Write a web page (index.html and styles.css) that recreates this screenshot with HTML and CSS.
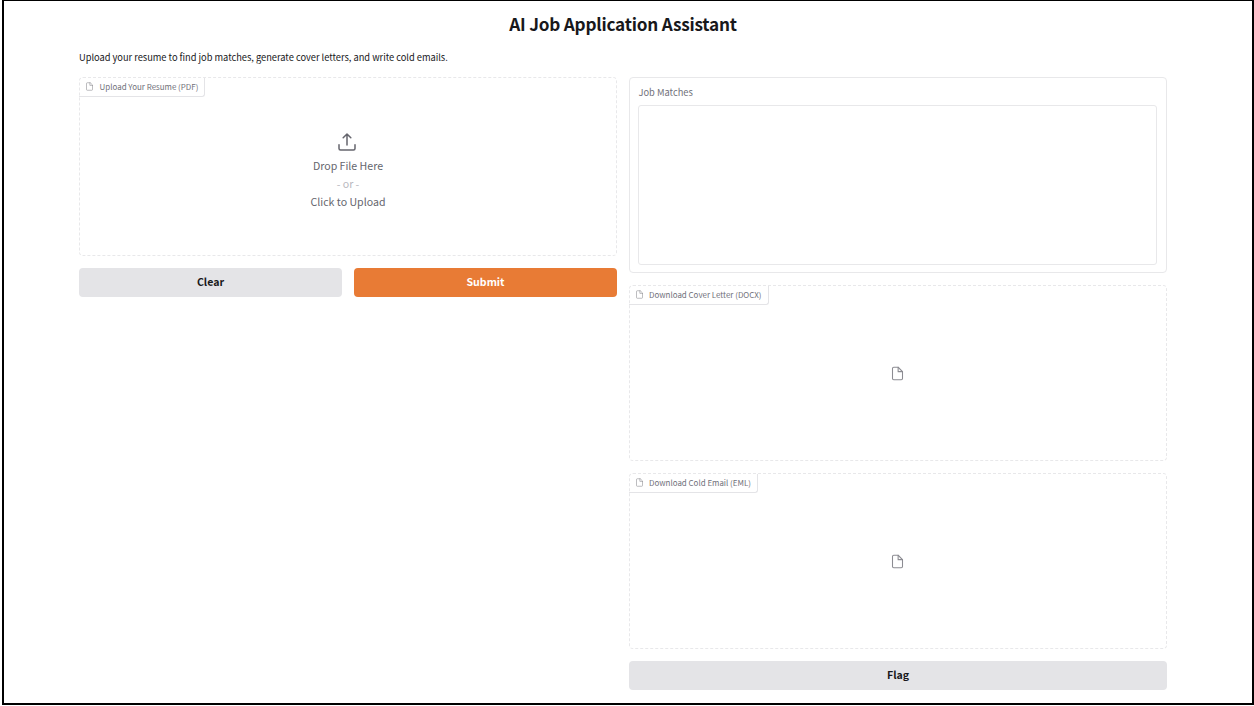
FILE: index.html
```html
<!DOCTYPE html>
<html lang="en">
<head>
<meta charset="utf-8">
<title>AI Job Application Assistant</title>
<link rel="stylesheet" href="styles.css">
</head>
<body>
<svg class="symbols" aria-hidden="true">
  <symbol id="file" viewBox="0 0 24 24">
    <path d="M13 2H6a2 2 0 0 0-2 2v16a2 2 0 0 0 2 2h12a2 2 0 0 0 2-2V9z"/>
    <path d="M13 2v7h7"/>
  </symbol>
</svg>
<main class="app">
  <h1 class="title">AI Job Application Assistant</h1>
  <p class="description">Upload your resume to find job matches, generate cover letters, and write cold emails.</p>
  <div class="columns">
    <section class="column">
      <div class="file-box upload">
        <div class="tag"><svg class="tag-icon"><use href="#file"/></svg><span>Upload Your Resume (PDF)</span></div>
        <button class="dropzone" type="button">
          <svg class="upload-icon" viewBox="0 0 18 18"><path d="M9 12V1.2M5.2 4.8 9 1l3.8 3.8M1 11.8v3.7A1.5 1.5 0 0 0 2.5 17h13a1.5 1.5 0 0 0 1.5-1.5v-3.7"/></svg>
          <span>Drop File Here</span>
          <span class="or">- or -</span>
          <span>Click to Upload</span>
        </button>
      </div>
      <div class="actions">
        <button class="button" type="button">Clear</button>
        <button class="button primary" type="button">Submit</button>
      </div>
    </section>
    <section class="column">
      <div class="matches">
        <label class="matches-label" for="matches">Job Matches</label>
        <textarea class="matches-field" id="matches" readonly></textarea>
      </div>
      <div class="file-box">
        <div class="tag"><svg class="tag-icon"><use href="#file"/></svg><span>Download Cover Letter (DOCX)</span></div>
        <div class="empty"><svg class="empty-icon"><use href="#file"/></svg></div>
      </div>
      <div class="file-box">
        <div class="tag"><svg class="tag-icon"><use href="#file"/></svg><span>Download Cold Email (EML)</span></div>
        <div class="empty"><svg class="empty-icon"><use href="#file"/></svg></div>
      </div>
      <button class="button" type="button">Flag</button>
    </section>
  </div>
</main>
</body>
</html>
```
FILE: styles.css
```css
* { box-sizing: border-box; }
body {
  margin: 0;
  background: #fff;
  color: #18181b;
  font-family: "Noto Sans CJK SC", "Noto Sans", sans-serif;
}
button, textarea { font: inherit; color: inherit; }
.symbols { display: none; }
svg {
  flex: none;
  fill: none;
  stroke: currentColor;
  stroke-linecap: round;
  stroke-linejoin: round;
}
.app {
  width: 1252px;
  height: 705px;
  margin-left: 2px;
  padding: 10px 85px 0 75px;
  border: 2px solid #000;
  border-top-width: 1px;
}
.title {
  margin: 0;
  font-size: 17.2px;
  letter-spacing: -0.22px;
  line-height: 26px;
  font-weight: 700;
  text-align: center;
}
.description {
  margin: 12px 0 12px;
  font-size: 9.3px;
  letter-spacing: -0.02px;
  line-height: 16px;
}
.columns {
  display: grid;
  grid-template-columns: 538px 538px;
  gap: 12px;
}
.column {
  display: flex;
  flex-direction: column;
  gap: 12px;
}
.file-box {
  position: relative;
  height: 176px;
  border: 1px dashed #e8e8ea;
  border-radius: 4px;
}
.upload { height: 179px; }
.tag {
  position: absolute;
  top: 0;
  left: -1px;
  display: flex;
  align-items: center;
  gap: 5px;
  height: 19px;
  padding: 0 6px 1px;
  border: solid #e4e4e7;
  border-width: 0 1px 1px 0;
  border-radius: 3px 0;
  color: #71717a;
  font-size: 7.95px;
  white-space: nowrap;
}
.upload .tag { gap: 5.6px; }
.tag-icon { width: 9px; height: 9px; stroke-width: 1.6; color: #909096; }
.dropzone {
  display: flex;
  flex-direction: column;
  align-items: center;
  width: 100%;
  height: 100%;
  padding: 55px 0 0;
  border: 0;
  background: none;
  color: #65656d;
  font-size: 10.6px;
  line-height: 17.8px;
}
.upload-icon { width: 18px; height: 18px; margin: 0 2px 6px 0; stroke-width: 1.5; }
.or { color: #b8b8be; }
.actions { display: grid; grid-template-columns: 1fr 1fr; gap: 12px; }
.button {
  height: 29px;
  padding: 0 0 1px;
  border: 0;
  border-radius: 4px;
  background: #e4e4e7;
  font-size: 10.6px;
  font-weight: 700;
  line-height: 28px;
}
.primary { background: #e87b35; color: #fff; }
.matches {
  display: flex;
  flex-direction: column;
  height: 196px;
  padding: 7px 9px 7px 8px;
  border: 1px solid #e8e8ea;
  border-radius: 4px;
}
.matches-label {
  height: 20px;
  padding-left: 0.5px;
  color: #71717a;
  font-size: 9.3px;
  line-height: 15px;
}
.matches-field {
  flex: 1;
  border: 1px solid #e8e8ea;
  border-radius: 3px;
  background: #fff;
  resize: none;
  outline: 0;
}
.empty {
  display: grid;
  place-items: center;
  height: 100%;
  padding: 0 1px 0 0;
  color: #8c8c92;
}
.empty-icon { width: 15px; height: 15px; stroke-width: 1.7; }
```
